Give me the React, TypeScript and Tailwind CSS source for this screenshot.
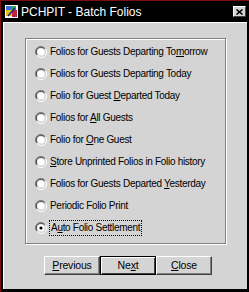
const options: { pre: string; key: string; post: string }[] = [
  { pre: "Folios for Guests Departing To", key: "m", post: "orrow" },
  { pre: "Folios for Guests Departin", key: "g", post: " Today" },
  { pre: "Folio for Guest ", key: "D", post: "eparted Today" },
  { pre: "Folios for ", key: "A", post: "ll Guests" },
  { pre: "Folio for ", key: "O", post: "ne Guest" },
  { pre: "", key: "S", post: "tore Unprinted Folios in Folio history" },
  { pre: "Folios for Guests Departed ", key: "Y", post: "esterday" },
  { pre: "Periodic Folio Print", key: "", post: "" },
  { pre: "A", key: "u", post: "to Folio Settlement" },
];

function Radio({ checked }: { checked?: boolean }) {
  return (
    <svg width="12" height="12" viewBox="0 0 12 12" className="shrink-0">
      <path d="M10 2.5A5 5 0 0 0 1.5 9" stroke="#808080" fill="none" />
      <path d="M9.5 3A4.3 4.3 0 0 0 2.2 8.6" stroke="#404040" fill="none" />
      <path d="M2 9.5A5 5 0 0 0 10.5 3" stroke="#ffffff" fill="none" />
      <circle cx="6" cy="6" r="3.6" fill="#ffffff" />
      {checked && <circle cx="6" cy="6" r="1.6" fill="#000" />}
    </svg>
  );
}

function Btn({ pre, k, post, def }: { pre: string; k: string; post: string; def?: boolean }) {
  return (
    <button
      className={
        "w-[56px] h-[19px] flex items-center justify-center text-[10.5px] tracking-[-0.2px] text-black bg-[#d4d4d4] " +
        (def
          ? "border border-black shadow-[inset_1px_1px_0_#fff,inset_-1px_-1px_0_#404040]"
          : "border-t border-l border-white border-r border-b border-r-[#404040] border-b-[#404040] shadow-[inset_-1px_-1px_0_#808080]")
      }
    >
      {pre}
      <span className="underline">{k}</span>
      {post}
    </button>
  );
}

export default function App() {
  return (
    <div className="w-[249px] h-[292px] bg-black border-l border-t border-[#7a0f0f] flex flex-col font-['Liberation_Sans',Arial,sans-serif]">
      {/* title bar */}
      <div className="h-[21px] flex items-center pl-[4px] pr-[3px] shrink-0">
        <svg width="13" height="13" viewBox="0 0 13 13" className="mr-[3px]">
          <rect x="0" y="0" width="13" height="13" fill="#fff" />
          <rect x="1" y="1" width="5" height="4" fill="#3a6fd8" />
          <rect x="6" y="1" width="5" height="4" fill="#2aa84a" />
          <rect x="1" y="5" width="6" height="6" fill="#e0c020" />
          <rect x="7" y="5" width="5" height="7" fill="#c02040" />
          <path d="M3 11L10 3" stroke="#202080" strokeWidth="1.5" />
        </svg>
        <span className="text-white text-[12px] leading-none whitespace-nowrap">PCHPIT - Batch Folios</span>
        <div className="ml-auto w-[13px] h-[11px] bg-[#d4d4d4] border-t border-l border-white border-r border-b border-r-[#404040] border-b-[#404040] flex items-center justify-center">
          <svg width="7" height="6" viewBox="0 0 7 6">
            <path d="M0.5 0.5L6.5 5.5M6.5 0.5L0.5 5.5" stroke="#000" strokeWidth="1.6" />
          </svg>
        </div>
      </div>

      {/* body */}
      <div className="ml-[2px] mr-[2px] mb-[3px] flex-1 bg-[#d4d4d4] border-l border-t border-white pt-[15px] flex flex-col">
        <div className="ml-[21px] w-[201px] h-[206px] border border-[#808080] shadow-[inset_1px_1px_0_#fff,1px_1px_0_#fff] pt-[2px] flex flex-col">
          {options.map((o, i) => (
            <div key={i} className="h-[22px] flex items-center pl-[9px] gap-[3px] text-[10px] tracking-[-0.3px] text-black leading-none whitespace-nowrap">
              <Radio checked={i === 8} />
              <span className={i === 8 ? "outline outline-1 outline-dotted outline-black px-[1px] py-[2px]" : ""}>
                {o.pre}
                {o.key && <span className="underline">{o.key}</span>}
                {o.post}
              </span>
            </div>
          ))}
        </div>
        <div className="mt-[12px] ml-[40px] flex">
          <Btn pre="" k="P" post="revious" />
          <Btn pre="Ne" k="x" post="t" def />
          <Btn pre="" k="C" post="lose" />
        </div>
      </div>
    </div>
  );
}
